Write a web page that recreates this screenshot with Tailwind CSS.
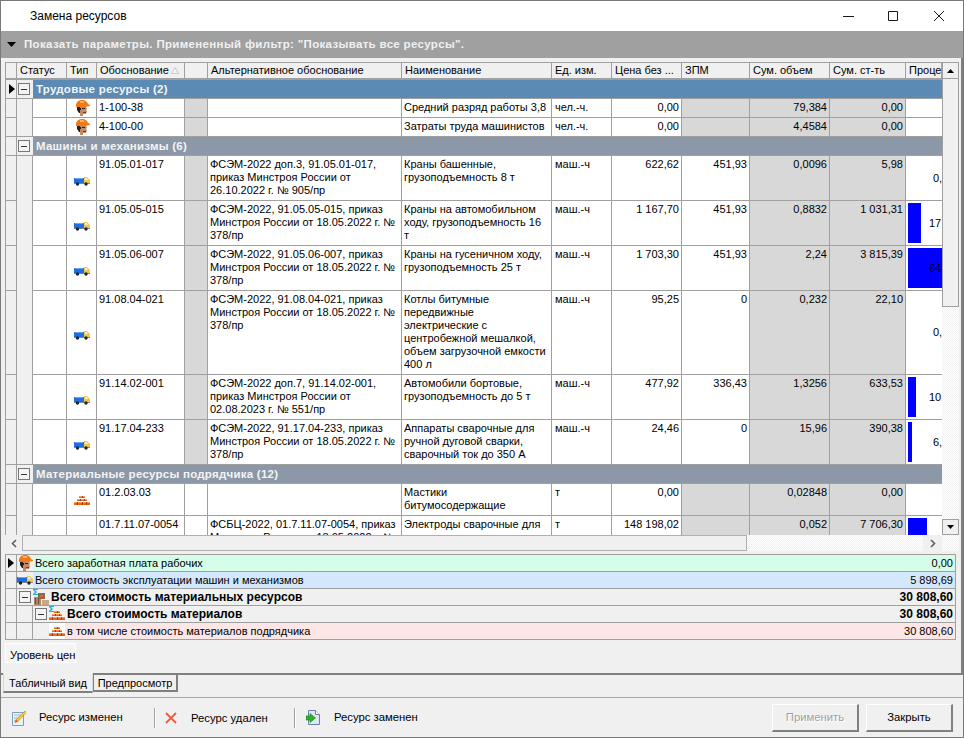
<!DOCTYPE html>
<html lang="ru">
<head>
  <meta charset="UTF-8">
  <title>Замена ресурсов</title>
  <script src="https://cdn.jsdelivr.net/npm/@tailwindcss/browser@4"></script>
</head>
<body class="m-0 bg-[#f0f0f0]">
  <!-- shared icons -->
  <svg class="hidden" xmlns="http://www.w3.org/2000/svg">
    <symbol id="worker" viewBox="0 0 16 16">
      <path d="M5 6h7l1 3-1 1 1 1-1 3H9v2H6v-3L4 11z" fill="#c08a64"/>
      <path d="M3 6h3v2h1v2H6v3H5L3 10z" fill="#2a1c18"/>
      <path d="M8 8h3v1H8z" fill="#33201a"/>
      <path d="M9 12h3v1H9z" fill="#7c3a28"/>
      <path d="M2 7V4l2-3 3-1h3l3 2 1 2 2 1v1l-5 1H5L3 7z" fill="#f07a14"/>
      <path d="M6 1h4v2H6z" fill="#ffb060"/>
    </symbol>
    <symbol id="truck" viewBox="0 0 16 10">
      <path d="M0 2h10v5H0z" fill="#1f6fe0"/>
      <path d="M1 2h8v1H1z" fill="#6aa8f0"/>
      <path d="M10 1h3l3 3v3h-6z" fill="#f2c64a"/>
      <path d="M11 2h2l1 2h-3z" fill="#dfeef8"/>
      <path d="M0 7h16v1H0z" fill="#7c8794"/>
      <circle cx="3.500" cy="8" r="1.700" fill="#20242a"/>
      <circle cx="12" cy="8" r="1.700" fill="#20242a"/>
    </symbol>
    <symbol id="bricks" viewBox="0 0 16 9">
      <path d="M5 0h6v2H5zM3 3h10v2H3zM0 6h16v3H0z" fill="#e8661c"/>
      <path d="M5 0h6v1H5zM3 3h10v1H3zM0 6h16v1H0z" fill="#f9a060"/>
      <path d="M8 0h1v2H8zM6 3h1v2H6zM10 3h1v2h-1zM3 6h1v3H3zM8 6h1v3H8zM12 6h1v3h-1z" fill="#a83c10"/>
    </symbol>
    <symbol id="sigma" viewBox="0 0 6 7">
      <path d="M0 0h5v1H2l2 2-2 2h3v1H0V5l2-2-2-2z" fill="#21b6d6"/>
    </symbol>
  </svg>

  <div class="w-[964px] h-[738px] overflow-hidden flex flex-col border border-[#7a7a7a] bg-[#f0f0f0] text-black font-['Liberation_Sans',sans-serif] text-[11px] leading-[13px]">
    <!-- title bar -->
    <header class="h-[30px] shrink-0 bg-white flex items-center pl-[29px]">
      <span class="flex-1 text-[12px]">Замена ресурсов</span>
      <svg width="140" height="30" viewBox="0 0 140 30" fill="none" stroke="#1a1a1a" stroke-width="1">
        <path d="M20 15.500h11"/>
        <path d="M65.500 10.500h9v9h-9z"/>
        <path d="M111 10l10 10M121 10l-10 10"/>
      </svg>
    </header>

    <!-- filter bar -->
    <div class="h-[27px] shrink-0 bg-[#a0a0a0] flex items-center pl-[6px] gap-[8px] text-[#f0f0f0] font-bold text-[11.5px] tracking-[0.33px]">
      <svg width="9" height="5" viewBox="0 0 9 5"><path d="M0 0h9L4.500 5z" fill="#000"/></svg>
      <span>Показать параметры. Примененный фильтр: "Показывать все ресурсы".</span>
    </div>

    <!-- grid area -->
    <div class="pt-[4px] pl-[4px] pr-[1px] shrink-0 border-r-2 border-[#808080]">
      <div class="flex h-[473px]">
        <div class="w-[937px] h-[473px] overflow-hidden">
          <table class="table-fixed w-[937px] border-separate border-spacing-0 [&_td]:border-r [&_td]:border-b [&_td]:border-[#a0a0a0] [&_td]:align-top [&_td]:px-[2px] [&_td]:pt-[2px] [&_td]:overflow-hidden [&_td:first-child]:border-l [&_td:nth-child(9)]:pl-[3px] [&_th]:border-r [&_th]:border-t [&_th]:border-b-2 [&_th]:border-[#a0a0a0] [&_th]:font-normal [&_th]:text-left [&_th]:px-[3px] [&_th]:whitespace-nowrap [&_th]:overflow-hidden [&_th]:bg-[#f0f0f0] [&_th:first-child]:border-l">
            <colgroup>
              <col class="w-[12px]"><col class="w-[16px]"><col class="w-[34px]"><col class="w-[30px]"><col class="w-[88px]"><col class="w-[23px]"><col class="w-[194px]"><col class="w-[150px]"><col class="w-[60px]"><col class="w-[70px]"><col class="w-[68px]"><col class="w-[80px]"><col class="w-[76px]"><col class="w-[36px]">
            </colgroup>
            <thead>
              <tr class="h-[18px]">
                <th></th>
                <th colspan="2">Статус</th><th>Тип</th>
                <th><span class="flex items-center gap-[2px]">Обоснование <svg width="8" height="7" viewBox="0 0 8 7"><path d="M4 .5L7.500 6.500H.5z" fill="#f4f4f4" stroke="#c8c8c8"/></svg></span></th>
                <th></th><th>Альтернативное обоснование</th><th>Наименование</th><th>Ед. изм.</th><th>Цена без ...</th><th>ЗПМ</th><th>Сум. объем</th><th>Сум. ст-ть</th><th class="border-r-0">Проце</th>
              </tr>
            </thead>
            <tbody>
              <!-- Трудовые ресурсы -->
              <tr class="h-[19px]">
                <td class="bg-[#f0f0f0] !p-0 !align-middle"><svg class="ml-[3px]" width="6" height="10" viewBox="0 0 6 10"><path d="M0 0l6 5-6 5z"/></svg></td>
                <td class="bg-[#f0f0f0] !p-0 !align-middle !border-r-0"><div class="ml-[1px] w-[12px] h-[12px] border border-[#777] bg-[#f4f4f4] flex items-center justify-center"><div class="w-[6px] h-px bg-[#333]"></div></div></td>
                <td colspan="12" class="bg-[#5b8ab5] text-[#f4f4f4] font-bold text-[11.5px] tracking-[0.25px] !pl-[3px] !align-middle !pt-0 !border-r-0">Трудовые ресурсы (2)</td>
              </tr>
              <tr class="h-[19px] bg-white">
                <td class="bg-[#f0f0f0]"></td><td class="bg-[#f0f0f0] !border-b-0"></td><td></td>
                <td class="!p-0 !align-middle"><svg class="mx-auto" width="16" height="16"><use href="#worker"/></svg></td>
                <td>1-100-38</td><td class="bg-[#d8d8d8]"></td><td></td>
                <td class="whitespace-nowrap">Средний разряд работы 3,8</td><td>чел.-ч.</td>
                <td class="text-right">0,00</td><td class="bg-[#d8d8d8]"></td><td class="text-right bg-[#d8d8d8]">79,384</td><td class="text-right bg-[#d8d8d8]">0,00</td><td class="!border-r-0"></td>
              </tr>
              <tr class="h-[19px] bg-white">
                <td class="bg-[#f0f0f0]"></td><td class="bg-[#f0f0f0]"></td><td></td>
                <td class="!p-0 !align-middle"><svg class="mx-auto" width="16" height="16"><use href="#worker"/></svg></td>
                <td>4-100-00</td><td class="bg-[#d8d8d8]"></td><td></td>
                <td class="whitespace-nowrap">Затраты труда машинистов</td><td>чел.-ч.</td>
                <td class="text-right">0,00</td><td class="bg-[#d8d8d8]"></td><td class="text-right bg-[#d8d8d8]">4,4584</td><td class="text-right bg-[#d8d8d8]">0,00</td><td class="!border-r-0"></td>
              </tr>

              <!-- Машины и механизмы -->
              <tr class="h-[19px]">
                <td class="bg-[#f0f0f0]"></td>
                <td class="bg-[#f0f0f0] !p-0 !align-middle !border-r-0"><div class="ml-[1px] w-[12px] h-[12px] border border-[#777] bg-[#f4f4f4] flex items-center justify-center"><div class="w-[6px] h-px bg-[#333]"></div></div></td>
                <td colspan="12" class="bg-[#8c98a8] text-[#f4f4f4] font-bold text-[11.5px] tracking-[0.25px] !pl-[3px] !align-middle !pt-0 !border-r-0">Машины и механизмы (6)</td>
              </tr>
              <tr class="h-[45px] bg-white">
                <td class="bg-[#f0f0f0]"></td><td class="bg-[#f0f0f0] !border-b-0"></td><td></td>
                <td class="!p-0 !align-middle"><svg class="mx-auto mt-[5px]" width="16" height="10"><use href="#truck"/></svg></td>
                <td>91.05.01-017</td><td class="bg-[#d8d8d8]"></td>
                <td>ФСЭМ-2022 доп.3, 91.05.01-017, приказ Минстроя России от 26.10.2022 г. № 905/пр</td>
                <td>Краны башенные, грузоподъемность 8 т</td><td>маш.-ч</td>
                <td class="text-right">622,62</td><td class="text-right">451,93</td><td class="text-right bg-[#d8d8d8]">0,0096</td><td class="text-right bg-[#d8d8d8]">5,98</td>
                <td class="!border-r-0 !p-0 !align-middle whitespace-nowrap"><span class="ml-[27px]">0,08</span></td>
              </tr>
              <tr class="h-[45px] bg-white">
                <td class="bg-[#f0f0f0]"></td><td class="bg-[#f0f0f0] !border-b-0"></td><td></td>
                <td class="!p-0 !align-middle"><svg class="mx-auto mt-[5px]" width="16" height="10"><use href="#truck"/></svg></td>
                <td>91.05.05-015</td><td class="bg-[#d8d8d8]"></td>
                <td>ФСЭМ-2022, 91.05.05-015, приказ Минстроя России от 18.05.2022 г. № 378/пр</td>
                <td>Краны на автомобильном ходу, грузоподъемность 16 т</td><td>маш.-ч</td>
                <td class="text-right">1 167,70</td><td class="text-right">451,93</td><td class="text-right bg-[#d8d8d8]">0,8832</td><td class="text-right bg-[#d8d8d8]">1 031,31</td>
                <td class="!border-r-0 !p-0 relative whitespace-nowrap !align-middle"><div class="absolute left-[2px] top-[2px] w-[13px] h-[40px] bg-[#0000ff]"></div><span class="relative ml-[23px]">17,5</span></td>
              </tr>
              <tr class="h-[45px] bg-white">
                <td class="bg-[#f0f0f0]"></td><td class="bg-[#f0f0f0] !border-b-0"></td><td></td>
                <td class="!p-0 !align-middle"><svg class="mx-auto mt-[5px]" width="16" height="10"><use href="#truck"/></svg></td>
                <td>91.05.06-007</td><td class="bg-[#d8d8d8]"></td>
                <td>ФСЭМ-2022, 91.05.06-007, приказ Минстроя России от 18.05.2022 г. № 378/пр</td>
                <td>Краны на гусеничном ходу, грузоподъемность 25 т</td><td>маш.-ч</td>
                <td class="text-right">1 703,30</td><td class="text-right">451,93</td><td class="text-right bg-[#d8d8d8]">2,24</td><td class="text-right bg-[#d8d8d8]">3 815,39</td>
                <td class="!border-r-0 !p-0 relative whitespace-nowrap !align-middle"><div class="absolute left-[2px] top-[2px] w-[34px] h-[40px] bg-[#0000ff]"></div><span class="relative ml-[23px]">64,7</span></td>
              </tr>
              <tr class="h-[84px] bg-white">
                <td class="bg-[#f0f0f0]"></td><td class="bg-[#f0f0f0] !border-b-0"></td><td></td>
                <td class="!p-0 !align-middle"><svg class="mx-auto mt-[5px]" width="16" height="10"><use href="#truck"/></svg></td>
                <td>91.08.04-021</td><td class="bg-[#d8d8d8]"></td>
                <td>ФСЭМ-2022, 91.08.04-021, приказ Минстроя России от 18.05.2022 г. № 378/пр</td>
                <td>Котлы битумные передвижные электрические с центробежной мешалкой, объем загрузочной емкости 400 л</td><td>маш.-ч</td>
                <td class="text-right">95,25</td><td class="text-right">0</td><td class="text-right bg-[#d8d8d8]">0,232</td><td class="text-right bg-[#d8d8d8]">22,10</td>
                <td class="!border-r-0 !p-0 !align-middle whitespace-nowrap"><span class="ml-[27px]">0,37</span></td>
              </tr>
              <tr class="h-[45px] bg-white">
                <td class="bg-[#f0f0f0]"></td><td class="bg-[#f0f0f0] !border-b-0"></td><td></td>
                <td class="!p-0 !align-middle"><svg class="mx-auto mt-[5px]" width="16" height="10"><use href="#truck"/></svg></td>
                <td>91.14.02-001</td><td class="bg-[#d8d8d8]"></td>
                <td>ФСЭМ-2022 доп.7, 91.14.02-001, приказ Минстроя России от 02.08.2023 г. № 551/пр</td>
                <td>Автомобили бортовые, грузоподъемность до 5 т</td><td>маш.-ч</td>
                <td class="text-right">477,92</td><td class="text-right">336,43</td><td class="text-right bg-[#d8d8d8]">1,3256</td><td class="text-right bg-[#d8d8d8]">633,53</td>
                <td class="!border-r-0 !p-0 relative whitespace-nowrap !align-middle"><div class="absolute left-[2px] top-[2px] w-[8px] h-[40px] bg-[#0000ff]"></div><span class="relative ml-[23px]">10,7</span></td>
              </tr>
              <tr class="h-[45px] bg-white">
                <td class="bg-[#f0f0f0]"></td><td class="bg-[#f0f0f0]"></td><td></td>
                <td class="!p-0 !align-middle"><svg class="mx-auto mt-[5px]" width="16" height="10"><use href="#truck"/></svg></td>
                <td>91.17.04-233</td><td class="bg-[#d8d8d8]"></td>
                <td>ФСЭМ-2022, 91.17.04-233, приказ Минстроя России от 18.05.2022 г. № 378/пр</td>
                <td>Аппараты сварочные для ручной дуговой сварки, сварочный ток до 350 А</td><td>маш.-ч</td>
                <td class="text-right">24,46</td><td class="text-right">0</td><td class="text-right bg-[#d8d8d8]">15,96</td><td class="text-right bg-[#d8d8d8]">390,38</td>
                <td class="!border-r-0 !p-0 relative whitespace-nowrap !align-middle"><div class="absolute left-[2px] top-[2px] w-[4px] h-[40px] bg-[#0000ff]"></div><span class="relative ml-[27px]">6,62</span></td>
              </tr>

              <!-- Материальные ресурсы подрядчика -->
              <tr class="h-[19px]">
                <td class="bg-[#f0f0f0]"></td>
                <td class="bg-[#f0f0f0] !p-0 !align-middle !border-r-0"><div class="ml-[1px] w-[12px] h-[12px] border border-[#777] bg-[#f4f4f4] flex items-center justify-center"><div class="w-[6px] h-px bg-[#333]"></div></div></td>
                <td colspan="12" class="bg-[#8c98a8] text-[#f4f4f4] font-bold text-[11.5px] tracking-[0.25px] !pl-[3px] !align-middle !pt-0 !border-r-0">Материальные ресурсы подрядчика (12)</td>
              </tr>
              <tr class="h-[32px] bg-white">
                <td class="bg-[#f0f0f0]"></td><td class="bg-[#f0f0f0] !border-b-0"></td><td></td>
                <td class="!p-0 !align-middle"><svg class="mx-auto mt-[2px]" width="16" height="9"><use href="#bricks"/></svg></td>
                <td>01.2.03.03</td><td></td><td></td>
                <td>Мастики битумосодержащие</td><td>т</td>
                <td class="text-right">0,00</td><td class="bg-[#d8d8d8]"></td><td class="text-right bg-[#d8d8d8]">0,02848</td><td class="text-right bg-[#d8d8d8]">0,00</td><td class="!border-r-0"></td>
              </tr>
              <tr class="h-[32px] bg-white">
                <td class="bg-[#f0f0f0]"></td><td class="bg-[#f0f0f0] !border-b-0"></td><td></td><td></td>
                <td>01.7.11.07-0054</td><td></td>
                <td>ФСБЦ-2022, 01.7.11.07-0054, приказ Минстроя России от 18.05.2022 г. №</td>
                <td>Электроды сварочные для</td><td>т</td>
                <td class="text-right">148 198,02</td><td class="bg-[#d8d8d8]"></td><td class="text-right bg-[#d8d8d8]">0,052</td><td class="text-right bg-[#d8d8d8]">7 706,30</td>
                <td class="!border-r-0 !p-0 relative"><div class="absolute left-[2px] top-[2px] w-[19px] h-[28px] bg-[#0000ff]"></div></td>
              </tr>
            </tbody>
          </table>
        </div>

        <!-- vertical scrollbar -->
        <div class="w-[17px] flex flex-col">
          <div class="h-[17px] bg-[#f0f0f0] border border-[#a0a0a0] flex items-center justify-center"><svg width="7" height="4" viewBox="0 0 7 4"><path d="M3.500 0L7 4H0z"/></svg></div>
          <div class="h-[228px] bg-[#f0f0f0] border-x border-b border-[#a0a0a0]"></div>
          <div class="flex-1 bg-[repeating-conic-gradient(#f0f0f0_0_25%,#fff_0_50%)] bg-[length:2px_2px]"></div>
          <div class="h-[16px] bg-[#f0f0f0] border border-[#a0a0a0] flex items-center justify-center"><svg width="7" height="4" viewBox="0 0 7 4"><path d="M0 0h7L3.500 4z"/></svg></div>
        </div>
      </div>

      <!-- horizontal scrollbar -->
      <div class="flex h-[16px] w-[954px]">
        <div class="w-[17px] flex items-center justify-center"><svg width="6" height="9" viewBox="0 0 6 9" fill="none" stroke="#606060" stroke-width="1.600"><path d="M5 1L1.500 4.500 5 8"/></svg></div>
        <div class="w-[725px] bg-[#f0f0f0] border border-[#b0b0b0]"></div>
        <div class="w-[176px] bg-[repeating-conic-gradient(#f0f0f0_0_25%,#fff_0_50%)] bg-[length:2px_2px]"></div>
        <div class="w-[19px] flex items-center justify-center"><svg width="6" height="9" viewBox="0 0 6 9" fill="none" stroke="#606060" stroke-width="1.600"><path d="M1 1l3.500 3.500L1 8"/></svg></div>
        <div class="flex-1 bg-[repeating-conic-gradient(#f0f0f0_0_25%,#fff_0_50%)] bg-[length:2px_2px]"></div>
      </div>

      <!-- totals -->
      <div class="mt-[3px] w-[951px] border-t border-r border-l border-[#a0a0a0]">
        <div class="flex h-[17px] border-b border-[#a0a0a0]">
          <div class="w-[11px] flex items-center justify-center border-r border-[#a0a0a0]"><svg width="6" height="10" viewBox="0 0 6 10"><path d="M0 0l6 5-6 5z"/></svg></div>
          <svg class="w-[16px] h-[16px]"><use href="#worker"/></svg>
          <div class="flex-1 bg-[#d5fde9] flex items-center justify-between pl-[2px] pr-[2px]"><span>Всего заработная плата рабочих</span><span>0,00</span></div>
        </div>
        <div class="flex h-[17px] border-b border-[#a0a0a0]">
          <div class="w-[11px] border-r border-[#a0a0a0]"></div>
          <div class="w-[16px] flex items-center"><svg class="w-[16px] h-[10px]"><use href="#truck"/></svg></div>
          <div class="flex-1 bg-[#d3e8fc] flex items-center justify-between pl-[2px] pr-[2px]"><span>Всего стоимость эксплуатации машин и механизмов</span><span>5 898,69</span></div>
        </div>
        <div class="flex h-[17px] border-b border-[#a0a0a0]">
          <div class="w-[11px] border-r border-[#a0a0a0]"></div>
          <div class="w-[16px] flex items-center pl-[2px]"><div class="w-[12px] h-[12px] border border-[#777] bg-[#f4f4f4] flex items-center justify-center"><div class="w-[6px] h-px bg-[#333]"></div></div></div>
          <div class="w-[18px] relative">
            <svg class="absolute left-0 top-0 w-[6px] h-[7px]"><use href="#sigma"/></svg>
            <svg class="absolute left-[1px] top-[3px]" width="15" height="13" viewBox="0 0 15 13"><path d="M0 5h7v8H0z" fill="#a88a68"/><path d="M4 1h7v6H4z" fill="#8a6a50"/><path d="M6 3h3v2H6z" fill="#e0661c"/><path d="M8 8h7v5H8z" fill="#caa884"/><path d="M1 6h1v6H1zM4 6h1v6H4z" fill="#6a5038"/></svg>
          </div>
          <div class="flex-1 flex items-center justify-between font-bold text-[12px] pr-[2px]"><span>Всего стоимость материальных ресурсов</span><span>30 808,60</span></div>
        </div>
        <div class="flex h-[17px] border-b border-[#a0a0a0]">
          <div class="w-[11px] border-r border-[#a0a0a0]"></div>
          <div class="w-[16px] border-r border-[#a0a0a0]"></div>
          <div class="w-[16px] flex items-center pl-[2px]"><div class="w-[12px] h-[12px] border border-[#777] bg-[#f4f4f4] flex items-center justify-center"><div class="w-[6px] h-px bg-[#333]"></div></div></div>
          <div class="w-[18px] relative">
            <svg class="absolute left-0 top-0 w-[6px] h-[7px]"><use href="#sigma"/></svg>
            <svg class="absolute left-0 top-[5px] w-[16px] h-[9px]"><use href="#bricks"/></svg>
          </div>
          <div class="flex-1 flex items-center justify-between font-bold text-[12px] pr-[2px]"><span>Всего стоимость материалов</span><span>30 808,60</span></div>
        </div>
        <div class="flex h-[17px] border-b border-[#a0a0a0]">
          <div class="w-[11px] border-r border-[#a0a0a0]"></div>
          <div class="w-[16px] border-r border-[#a0a0a0]"></div>
          <div class="w-[16px]"></div>
          <div class="w-[16px] bg-white flex items-center"><svg class="w-[16px] h-[9px]"><use href="#bricks"/></svg></div>
          <div class="flex-1 bg-[#fde6e6] flex items-center justify-between pl-[2px] pr-[2px]"><span>в том числе стоимость материалов подрядчика</span><span>30 808,60</span></div>
        </div>
      </div>

      <!-- price level tab -->
      <div class="mt-[3px] w-[71px] h-[20px] border border-white flex items-center pl-[4px] pt-[5px] text-[11.3px] whitespace-nowrap bg-[repeating-conic-gradient(#f0f0f0_0_25%,#f8f8f8_0_50%)] bg-[length:2px_2px]">Уровень цен</div>
    </div>

    <!-- view tabs: the side rule of the grid panel runs down to the strip -->
    <div class="h-[10px] shrink-0 border-r-2 border-[#808080]"></div>
    <div class="h-[24px] shrink-0 border-t-2 border-t-[#808080] flex pl-[2px] items-start">
      <div class="w-[90px] h-[20px] -mt-[2px] pt-[3px] bg-[#f0f0f0] border-x border-b-2 border-x-[#d8d8d8] border-b-[#808080] flex items-center justify-center">Табличный вид</div>
      <div class="w-[85px] h-[18px] -mt-[1px] pt-[1px] border border-[#808080] border-b-2 border-r-2 flex items-center justify-center">Предпросмотр</div>
    </div>

    <!-- footer -->
    <footer class="flex-1 border-t border-[#a8a8a8] flex items-center pl-[11px] pr-[10px] text-[11.3px]">
      <svg width="14" height="16" viewBox="0 0 14 16"><path d="M.5 2.500h11v13H.5z" fill="#e8f2fa" stroke="#7ba0b8"/><path d="M2 5h7M2 8h6M2 11h4" stroke="#9ab8cc"/><path d="M13 1l1 1.500-8 9-3 1 1-3z" fill="#f4c832" stroke="#c08a1c" stroke-width=".6"/><path d="M3 12.500l1-3 2 2z" fill="#d05a30"/></svg>
      <span class="ml-[13px] w-[115px]">Ресурс изменен</span>
      <div class="w-[2px] h-[20px] border-l border-[#a0a0a0] bg-white"></div>
      <svg class="ml-[9px]" width="12" height="12" viewBox="0 0 12 12" stroke="#ee5b3c" stroke-width="1.800"><path d="M1 1l10 10M11 1L1 11"/></svg>
      <span class="ml-[14px] w-[103px] pt-[1px]">Ресурс удален</span>
      <div class="w-[2px] h-[20px] border-l border-[#a0a0a0] bg-white"></div>
      <svg class="ml-[10px]" width="14" height="15" viewBox="0 0 14 15"><path d="M2.500.5h7l4 4v10h-11z" fill="#dfe8f4" stroke="#6a82a8"/><path d="M9.500.5v4h4" fill="#fff" stroke="#6a82a8"/><path d="M0 6h4V3.500L9.500 8 4 12.500V10H0z" fill="#32b02c" stroke="#17801a" stroke-width=".6"/></svg>
      <span class="ml-[14px] flex-1">Ресурс заменен</span>
      <button class="w-[87px] h-[28px] bg-[#f0f0f0] text-[#a0a0a0] border border-[#ffffff] border-r-[#808080] border-b-[#808080] border-b-2 border-r-2 [text-shadow:1px_1px_0_#fff]">Применить</button>
      <button class="ml-[7px] w-[87px] h-[28px] bg-[#f0f0f0] border border-[#ffffff] border-r-[#808080] border-b-[#808080] border-b-2 border-r-2">Закрыть</button>
    </footer>
  </div>
</body>
</html>
